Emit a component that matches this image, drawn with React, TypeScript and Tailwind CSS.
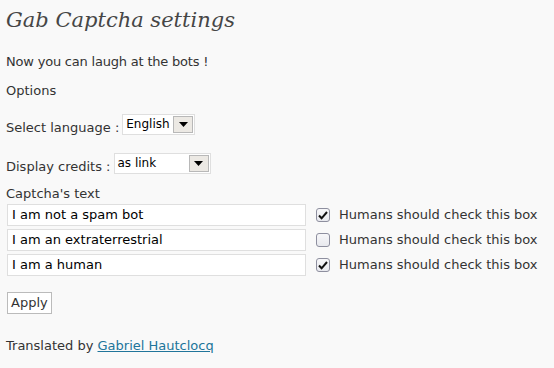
const font = "font-['DejaVu_Sans',Verdana,sans-serif]";

const Select = ({value, width}: {value: string; width: string}) => (
  <div className={`flex h-[21px] ${width} border border-[#dfdfdf] bg-white`}>
    <span className="flex-1 pl-[3px] text-[12px] leading-[18px] text-black">{value}</span>
    <span className="m-[1px] flex w-[20px] items-center justify-center border border-[#b8b8b8] bg-[#ece9e4]">
      <svg width="9" height="5" viewBox="0 0 9 5">
        <path d="M0 0h9L4.5 5z" fill="#000" />
      </svg>
    </span>
  </div>
);

const Check = ({checked}: {checked: boolean}) => (
  <span className="flex h-[14px] w-[14px] items-center justify-center rounded-[3px] border border-[#8e8f9f] bg-[linear-gradient(#f7f7f9,#e8e9ee)]">
    {checked && (
      <svg width="10" height="9" viewBox="0 0 10 9">
        <path d="M1 4.5l2.6 2.8L9 1" stroke="#111" strokeWidth="2" fill="none" />
      </svg>
    )}
  </span>
);

const rows = [
  {text: 'I am not a spam bot', checked: true},
  {text: 'I am an extraterrestrial', checked: false},
  {text: 'I am a human', checked: true},
];

const App = () => {
  return (
    <div className={`h-[368px] w-[554px] bg-[#f9f9f9] px-[6px] text-[13px] leading-[16px] text-[#333] ${font}`}>
      <h2 className="pt-[5px] font-['DejaVu_Serif',Georgia,serif] text-[21px] italic leading-[30px] text-[#464646]">
        Gab Captcha settings
      </h2>
      <p className="mt-[19px] tracking-[-0.2px]">Now you can laugh at the bots !</p>
      <p className="mt-[13px]">Options</p>
      <div className="mt-[14px] flex items-center gap-[3px]">
        <span className="pt-[7px]">Select language :</span>
        <Select value="English" width="w-[73px]" />
      </div>
      <div className="mt-[16px] flex items-center gap-[3px]">
        <span className="pt-[7px]">Display credits :</span>
        <Select value="as link" width="w-[97px]" />
      </div>
      <p className="mt-[11px]">Captcha's text</p>
      <div className="mt-[2px] flex flex-col gap-[3px]">
        {rows.map((row, index) => (
          <div key={index} className="flex h-[22px] items-center">
            <div className="ml-[1px] h-[22px] w-[299px] border border-[#dfdfdf] bg-white pl-[4px] leading-[20px] text-black">
              {row.text}
            </div>
            <div className="ml-[10px] flex">
              <Check checked={row.checked} />
            </div>
            <span className="ml-[9px]">Humans should check this box</span>
          </div>
        ))}
      </div>
      <button className="ml-[1px] mt-[16px] h-[22px] border border-[#bbb] bg-white px-[3px] leading-[18px] text-[#333]">
        Apply
      </button>
      <p className="mt-[24px]">
        Translated by{' '}
        <a href="#" className="text-[#21759b] underline">
          Gabriel Hautclocq
        </a>
      </p>
    </div>
  );
};

export default App;
